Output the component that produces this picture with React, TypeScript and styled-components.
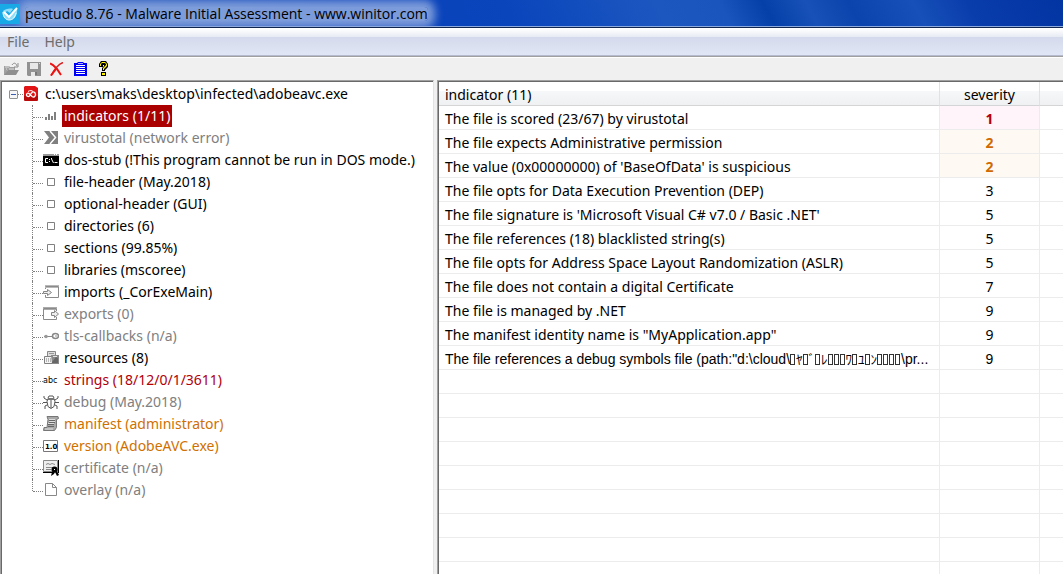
import React from "react";
import styled, { createGlobalStyle, css } from "styled-components";

const GlobalStyle = createGlobalStyle`
  * { box-sizing: border-box; }
  html, body, #root { height: 100%; }
  body {
    margin: 0;
    overflow: hidden;
    background: #f0f0f0;
    color: #000;
    font-family: "Noto Sans", "Open Sans", sans-serif;
    font-size: 14px;
    line-height: 22px;
  }
`;

const Window = styled.div`
  display: flex;
  flex-direction: column;
  height: 100vh;
`;

const TitleBar = styled.header`
  display: flex;
  align-items: center;
  flex: none;
  height: 28px;
  gap: 5px;
  padding-top: 1px;
  overflow: hidden;
  border-bottom: 1px solid #10264f;
  background:
    linear-gradient(#8ea9dc, #8ea9dc) bottom / 100% 1px no-repeat,
    linear-gradient(
      62deg,
      #4a78d0 0,
      #1a4fb8 12%,
      #0a42ba 34%,
      #0a45bc 48%,
      #1c57c0 62%,
      #1a55bd 68%,
      #0440a8 72%,
      #1852b8 76%,
      #0b44ac 80%,
      #1650b8 86%,
      #0a3dac 91%,
      #0235a2 100%
    );

  svg { position: relative; }
`;

const Title = styled.h1`
  margin: 0;
  font-family: "Open Sans", "Noto Sans", sans-serif;
  font-size: 14px;
  font-weight: 400;
  line-height: 14px;
  background: rgba(140, 167, 222, 0.88);
  box-shadow: 0 0 8px 7px rgba(140, 167, 222, 0.88);
  border-radius: 4px;
`;

const MenuBar = styled.nav`
  display: flex;
  flex: none;
  height: 28px;
  gap: 15px;
  padding: 0 7px;
  border-top: 1px solid #fff;
  border-bottom: 1px solid #b6bacf;
  background: linear-gradient(#fff 0, #e6eaf3 8px, #d4daeb 8px, #e1e6f6 100%);
`;

const MenuButton = styled.button`
  padding: 0;
  border: 0;
  background: none;
  color: #6d6d6d;
  font: inherit;
`;

const Toolbar = styled.div`
  display: flex;
  align-items: center;
  flex: none;
  height: 24px;
  gap: 8px;
  padding: 0 4px;
  border-top: 1px solid #a0a0a0;
  box-shadow: inset 0 1px 0 #fff;
`;

const ToolButton = styled.button`
  display: grid;
  place-items: center;
  width: 15px;
  height: 16px;
  padding: 0;
  border: 0;
  background: none;
`;

const Panels = styled.main`
  display: flex;
  flex: 1;
  min-height: 0;
  gap: 3px;
`;

const Panel = styled.section`
  overflow: hidden;
  background: #fff;
  border: 1px solid #a0a0a0;
  border-bottom: 0;
  box-shadow: inset 1px 1px 0 #696969;
`;

const TreePanel = styled(Panel)`
  flex: 0 0 434px;
  padding: 2px 0 0 2px;
  border-right-color: #e3e3e3;
`;

const ListPanel = styled(Panel)`
  flex: 1;
  min-width: 0;
  padding: 1px 0 0 1px;
  border-right: 0;
`;

const Tree = styled.ul`
  margin: 0;
  padding: 0;
  list-style: none;
`;

const Branches = styled(Tree)`
  padding-left: 29px;
`;

const RootRow = styled.div`
  display: flex;
  align-items: center;
  height: 22px;
  padding-left: 6px;
`;

const Expander = styled.button`
  display: grid;
  place-items: center;
  width: 9px;
  height: 9px;
  padding: 0;
  border: 1px solid #919191;
  border-radius: 1px;
  background: #f6f6f6;

  &::before {
    content: "";
    width: 5px;
    height: 1px;
    background: #3a5fb0;
  }
`;

const Dots = styled.span`
  width: 5px;
  border-bottom: 1px dotted #808080;
`;

const RootLabel = styled.span`
  padding-left: 6px;
`;

const Row = styled.li`
  display: flex;
  align-items: center;
  height: 22px;
`;

const Connector = styled.span<{ $last?: boolean }>`
  align-self: flex-start;
  width: 11px;
  height: ${(p) => (p.$last ? "12px" : "22px")};
  border-left: 1px dotted #808080;

  &::before {
    content: "";
    display: block;
    height: 12px;
    border-bottom: 1px dotted #808080;
  }
`;

type Tone = "normal" | "muted" | "red" | "orange" | "selected";

const tones: Record<Tone, ReturnType<typeof css>> = {
  normal: css`color: #000;`,
  muted: css`color: #808080;`,
  red: css`color: #b00008;`,
  orange: css`color: #d07000;`,
  selected: css`
    color: #fff;
    background: #aa0000;
  `,
};

const ItemLabel = styled.span<{ $tone: Tone }>`
  margin-left: 3px;
  padding: 0 2px;
  white-space: nowrap;
  ${(p) => tones[p.$tone]}
`;

const Table = styled.table`
  width: 100%;
  table-layout: fixed;
  border-collapse: separate;
  border-spacing: 0;
`;

const HeadCell = styled.th<{ $center?: boolean }>`
  height: 24px;
  padding: 2px 6px 0;
  text-align: ${(p) => (p.$center ? "center" : "left")};
  font-weight: 400;
  line-height: 20px;
  border-right: 1px solid #e0e2e4;
  border-bottom: 1px solid #d5d5d5;
  background: linear-gradient(#fff 9px, #f6f7f8 9px, #f0f1f2);

  &:last-child { border-right: 0; }
`;

const Cell = styled.td<{ $level?: "high" | "medium"; $center?: boolean; $fallback?: boolean }>`
  height: 24px;
  padding: 3px 6px 0;
  line-height: 20px;
  overflow: hidden;
  white-space: nowrap;
  text-overflow: ellipsis;
  text-align: ${(p) => (p.$center ? "center" : "left")};
  border-right: 1px solid #ececec;
  border-bottom: 1px solid #ececec;
  ${(p) => p.$fallback && css`font-family: "Liberation Sans", "Noto Sans CJK JP", sans-serif;`}
  ${(p) => p.$level === "high" && css`color: #b00008; background: #fff4fa; font-weight: 700;`}
  ${(p) => p.$level === "medium" && css`color: #cf6a00; background: #fff9f4; font-weight: 700;`}

  &:last-child { border-right: 0; }
`;

/* Hollow box shown for a character the font has no glyph for. */
const MissingGlyph = styled.span`
  display: inline-block;
  width: 5px;
  height: 11px;
  margin-right: 1px;
  border: 1px solid #333;
  vertical-align: -1px;
`;

const Kana = styled.span`
  font-family: "Noto Sans CJK JP", sans-serif;
  font-size: 13px;
  line-height: 18px;
`;

const Svg = ({ children, w = 16, h = 16 }: { children: React.ReactNode; w?: number; h?: number }) => (
  <svg width={w} height={h} viewBox={`0 0 ${w} ${h}`} fill="none" aria-hidden="true">
    {children}
  </svg>
);

const AppIcon = () => (
  <Svg w={20} h={20}>
    <path d="M0 0h20v20H0z" fill="#18a9e6" />
    <path d="M3 7c2-2 7-3 10-2l-3 4-3-2-2 2 4 5 8-10c1 6-2 12-7 12S2 13 3 7z" fill="#8fdcf8" />
    <path d="m4 8 5 5 8-9" stroke="#fff" strokeWidth="2" />
    <path d="M3 8c0 5 3 8 6 8 4 0 6-3 7-7" stroke="#e8faff" />
  </Svg>
);

const OpenIcon = () => (
  <Svg w={15} h={14}>
    <path d="M0 13V4h5l1 1h5v3H4l-3 5z" fill="#a0a0a0" />
    <path d="M4 8h11l-3 5H0z" fill="#8f8f8f" />
    <path d="M1 5h4M2 7h1M5 7h5" stroke="#ddd" />
    <path d="M8 3c2-3 4-2 5 1M14 1v4h-4" stroke="#8c8c8c" />
  </Svg>
);

const SaveIcon = () => (
  <Svg w={15} h={14}>
    <path d="M0 0h14v14H1l-1-1z" fill="#929292" />
    <path d="M3 1h8v6H3zM4 10h4v4H4z" fill="#e8e8e8" />
    <path d="M12 1h1v1h-1z" fill="#ddd" />
    <path d="M8 10h2v3H8z" fill="#777" />
  </Svg>
);

const DeleteIcon = () => (
  <Svg w={15} h={14}>
    <path d="M0 1.500 3 3l4 4 4 6" stroke="#f01010" strokeWidth="2" />
    <path d="M13 .5C9 2 4 8 1 13.500" stroke="#d82020" strokeWidth="1.500" />
    <path d="M6 7 1 13.500" stroke="#f01010" strokeWidth="2" />
  </Svg>
);

const ReportIcon = () => (
  <Svg w={13} h={14}>
    <path d="M0 1h3l1-1h5l1 1h3v13H0z" fill="#0000f8" />
    <path d="M2 3h9v10H2z" fill="#fff" />
    <path d="M2 4.500h9M2 6.500h9M2 8.500h9M2 10.500h9M2 12.500h9" stroke="#0000f8" />
    <path d="M4 1h5v1H4z" fill="#a8a8ff" />
  </Svg>
);

const HelpIcon = () => (
  <Svg w={12} h={15}>
    <path d="M1 6V3l2-3h5l2 3v3L7 9v1H4V7l2-2V4H5v2z" fill="#000" />
    <path d="M2 5V3l2-2h3l2 2v2L6 8v1H5V7l3-3V3L7 2H4L3 3v2z" fill="#fff200" />
    <path d="M3 11h5v4H3z" fill="#000" />
    <path d="M4 12h3v2H4z" fill="#fff200" />
  </Svg>
);

const RootIcon = () => (
  <Svg>
    <path d="M2 0h10l3 2v12l-1 1H2l-1-1V1z" fill="#e01414" />
    <path d="M1 10h14v4l-1 1H2l-1-1z" fill="#b80a0a" />
    <path d="M8 9.500 6 7.500c-1-1-2.500 0-2.500 1.500s2 2 3 1l2-3c1.500-2 4-1 4 1.500s-2 3-3.500 2l-2-2" stroke="#fff" strokeWidth="1.300" />
    <path d="M5 5.500c2-1.500 4-1 5 0" stroke="#fff" />
  </Svg>
);

const ChartIcon = () => (
  <Svg>
    <path d="M2 9h2v3H2zM5 6h2v6H5zM8 8h2v4H8zM11 4h2v8h-2z" fill="#808080" />
  </Svg>
);

const VirusTotalIcon = () => (
  <Svg>
    <path d="M1 1h14v13H1l5-6.500z" fill="#808080" />
    <path d="m7 1 5.500 6.500L7 14" stroke="#fff" strokeWidth="1.500" />
  </Svg>
);

const DosIcon = () => (
  <Svg>
    <path d="M0 2h16v12H0z" fill="#000" />
    <path d="M0 2h16v2H0z" fill="#999" />
    <path d="M11 2h1v1h-1zM13 2h1v1h-1z" fill="#fff" />
    <path d="M5 6.500H2.500v4H5M6.500 7v1M6.500 9v1M8.500 6v1l2 4M11.500 10.500h3" stroke="#fff" />
  </Svg>
);

const BoxIcon = () => (
  <Svg>
    <path d="M4.500 4.500h7v7h-7z" stroke="#808080" fill="#fff" />
  </Svg>
);

const ImportIcon = () => (
  <Svg>
    <path d="M2.500 5V2.500h13v11h-13V11" stroke="#8a8a8a" />
    <path d="M2 1.500h14M2 3.500h13" stroke="#b8b8b8" />
    <path d="M.5 7.500h4V5.500l4 3-4 3V9.500h-4z" fill="#eee" stroke="#858585" />
  </Svg>
);

const ExportIcon = () => (
  <Svg>
    <path d="M13.500 5V2.500H.5v11h13V11" stroke="#8a8a8a" />
    <path d="M0 1.500h14M1 3.500h12" stroke="#aaa" />
    <path d="M8.500 6.500h3v-2l4 3.500-4 3.500v-2h-3z" fill="#eee" stroke="#858585" />
  </Svg>
);

const KeyIcon = () => (
  <Svg>
    <ellipse cx="12.500" cy="8" rx="3" ry="2.500" stroke="#888" strokeWidth="1.500" />
    <path d="M1 8.500h9" stroke="#888" />
    <circle cx="3" cy="8.500" r="1.800" fill="#999" />
    <path d="M12 8h2" stroke="#999" />
  </Svg>
);

const ResourcesIcon = () => (
  <Svg>
    <path d="M4.500 1.500h8v5h-8z" fill="#ddd" stroke="#888" />
    <path d="M1.500 6.500h9v7h-9z" fill="#f4f4f4" stroke="#808080" />
    <path d="M3 9h6M3 11h6" stroke="#777" strokeDasharray="1 1" />
    <path d="M8 5h8v9H9z" fill="#8a8a8a" />
    <path d="m9 12 4-5 2 1v5H9z" fill="#666" />
    <path d="M10 6h4v1h-4z" fill="#e4e4e4" />
    <path d="M6 3.500h5" stroke="#999" />
  </Svg>
);

const StringsIcon = () => (
  <Svg>
    <text x="0" y="11" fontFamily="DejaVu Sans" fontSize="8" fill="#000">abc</text>
  </Svg>
);

const BugIcon = () => (
  <Svg>
    <path d="M5 4.500h6l1 3-1 5-3 2-3-2-1-5zM8 5v9M5 4l1-2h4l1 2" stroke="#555" />
    <path d="M4 6 1 4V2M12 6l3-2V2M4 8.500H0M12 8.500h4M4 11l-2 1v3M12 11l2 1v3" stroke="#555" />
    <path d="M5 4h6v2H5z" fill="#777" />
  </Svg>
);

const ManifestIcon = () => (
  <Svg>
    <path d="M4 .5h11l.5 2-2 1v8l-2 3H.5l.5-3h3l1-8z" fill="#a8a8a8" stroke="#777" />
    <path d="M6 4.500h6M6 6.500h6M5 8.500h6M5 10.500h6" stroke="#666" />
    <path d="M6 3.500h6M6 5.500h6M5 7.500h6M2 13h8" stroke="#ddd" />
  </Svg>
);

const VersionIcon = () => (
  <Svg>
    <path d="M.5 2.500h14v11H.5z" fill="#fff" stroke="#777" />
    <text x="2" y="11" fontFamily="DejaVu Sans" fontWeight="700" fontSize="7" fill="#000">1.0</text>
  </Svg>
);

const CertificateIcon = () => (
  <Svg>
    <path d="M.5 .5h14v11H.5z" fill="#eee" stroke="#888" />
    <path d="M15.500 0v13M0 12.500h10" stroke="#000" />
    <path d="m3 4.500 2-1 2 1 2-1 3 1M3 7.500h8M3 9.500h5" stroke="#888" />
    <circle cx="11.500" cy="9.500" r="3" fill="#000" />
    <path d="m9 12-1 4 3-2 1-2 2 4 2-1-2-4z" fill="#000" />
    <path d="M11 9h1v1h-1z" fill="#fff" />
  </Svg>
);

const OverlayIcon = () => (
  <Svg>
    <path d="M2.500 1.500h7l4 4v8h-11zM9.500 1.500v4h4" fill="#fff" stroke="#888" />
  </Svg>
);

const tools = [
  { name: "Open file", icon: <OpenIcon /> },
  { name: "Save", icon: <SaveIcon /> },
  { name: "Delete", icon: <DeleteIcon /> },
  { name: "Report", icon: <ReportIcon /> },
  { name: "Help topics", icon: <HelpIcon /> },
];

const items: { label: string; tone: Tone; icon: React.ReactNode }[] = [
  { label: "indicators (1/11)", tone: "selected", icon: <ChartIcon /> },
  { label: "virustotal (network error)", tone: "muted", icon: <VirusTotalIcon /> },
  { label: "dos-stub (!This program cannot be run in DOS mode.)", tone: "normal", icon: <DosIcon /> },
  { label: "file-header (May.2018)", tone: "normal", icon: <BoxIcon /> },
  { label: "optional-header (GUI)", tone: "normal", icon: <BoxIcon /> },
  { label: "directories (6)", tone: "normal", icon: <BoxIcon /> },
  { label: "sections (99.85%)", tone: "normal", icon: <BoxIcon /> },
  { label: "libraries (mscoree)", tone: "normal", icon: <BoxIcon /> },
  { label: "imports (_CorExeMain)", tone: "normal", icon: <ImportIcon /> },
  { label: "exports (0)", tone: "muted", icon: <ExportIcon /> },
  { label: "tls-callbacks (n/a)", tone: "muted", icon: <KeyIcon /> },
  { label: "resources (8)", tone: "normal", icon: <ResourcesIcon /> },
  { label: "strings (18/12/0/1/3611)", tone: "red", icon: <StringsIcon /> },
  { label: "debug (May.2018)", tone: "muted", icon: <BugIcon /> },
  { label: "manifest (administrator)", tone: "orange", icon: <ManifestIcon /> },
  { label: "version (AdobeAVC.exe)", tone: "orange", icon: <VersionIcon /> },
  { label: "certificate (n/a)", tone: "muted", icon: <CertificateIcon /> },
  { label: "overlay (n/a)", tone: "muted", icon: <OverlayIcon /> },
];

/* Each run: how many unprintable characters, then the kana that follows. */
const pathRuns: [number, string][] = [
  [1, "ﾔ"],
  [1, "ﾞ"],
  [1, "ﾚ"],
  [3, "ﾜ"],
  [1, "ﾕ"],
  [1, "ﾝ"],
  [4, ""],
];

const debugPath = (
  <>
    The file references a debug symbols file (path:"d:\cloud\
    {pathRuns.map(([missing, kana], i) => (
      <React.Fragment key={i}>
        {Array.from({ length: missing }, (_, n) => (
          <MissingGlyph key={n} />
        ))}
        <Kana>{kana}</Kana>
      </React.Fragment>
    ))}
    \pr...
  </>
);

const indicators: { text: React.ReactNode; severity: number; fallback?: boolean }[] = [
  { text: "The file is scored (23/67) by virustotal", severity: 1 },
  { text: "The file expects Administrative permission", severity: 2 },
  { text: "The value (0x00000000) of 'BaseOfData' is suspicious", severity: 2 },
  { text: "The file opts for Data Execution Prevention (DEP)", severity: 3 },
  { text: "The file signature is 'Microsoft Visual C# v7.0 / Basic .NET'", severity: 5 },
  { text: "The file references (18) blacklisted string(s)", severity: 5 },
  { text: "The file opts for Address Space Layout Randomization (ASLR)", severity: 5 },
  { text: "The file does not contain a digital Certificate", severity: 7 },
  { text: "The file is managed by .NET", severity: 9 },
  { text: 'The manifest identity name is "MyApplication.app"', severity: 9 },
  { text: debugPath, severity: 9, fallback: true },
];

const emptyRows = Array.from({ length: 9 }, (_, i) => i);

const levelOf = (severity: number) =>
  severity === 1 ? "high" : severity === 2 ? "medium" : undefined;

export default function App() {
  return (
    <>
      <GlobalStyle />
      <Window>
        <TitleBar>
          <AppIcon />
          <Title>pestudio 8.76 - Malware Initial Assessment - www.winitor.com</Title>
        </TitleBar>
        <MenuBar>
          <MenuButton>File</MenuButton>
          <MenuButton>Help</MenuButton>
        </MenuBar>
        <Toolbar>
          {tools.map((tool) => (
            <ToolButton key={tool.name} aria-label={tool.name}>
              {tool.icon}
            </ToolButton>
          ))}
        </Toolbar>
        <Panels>
          <TreePanel>
            <Tree>
              <li>
                <RootRow>
                  <Expander aria-label="Collapse" />
                  <Dots />
                  <RootIcon />
                  <RootLabel>c:\users\maks\desktop\infected\adobeavc.exe</RootLabel>
                </RootRow>
                <Branches>
                  {items.map((item, i) => (
                    <Row key={item.label}>
                      <Connector $last={i === items.length - 1} />
                      {item.icon}
                      <ItemLabel $tone={item.tone}>{item.label}</ItemLabel>
                    </Row>
                  ))}
                </Branches>
              </li>
            </Tree>
          </TreePanel>
          <ListPanel>
            <Table>
              <colgroup>
                <col />
                <col width="100" />
                <col width="23" />
              </colgroup>
              <thead>
                <tr>
                  <HeadCell>indicator (11)</HeadCell>
                  <HeadCell $center>severity</HeadCell>
                  <HeadCell />
                </tr>
              </thead>
              <tbody>
                {indicators.map((row, i) => (
                  <tr key={i}>
                    <Cell $fallback={row.fallback}>{row.text}</Cell>
                    <Cell $center $level={levelOf(row.severity)} $fallback={row.fallback}>
                      {row.severity}
                    </Cell>
                    <Cell />
                  </tr>
                ))}
                {emptyRows.map((i) => (
                  <tr key={`empty-${i}`}>
                    <Cell />
                    <Cell />
                    <Cell />
                  </tr>
                ))}
              </tbody>
            </Table>
          </ListPanel>
        </Panels>
      </Window>
    </>
  );
}
